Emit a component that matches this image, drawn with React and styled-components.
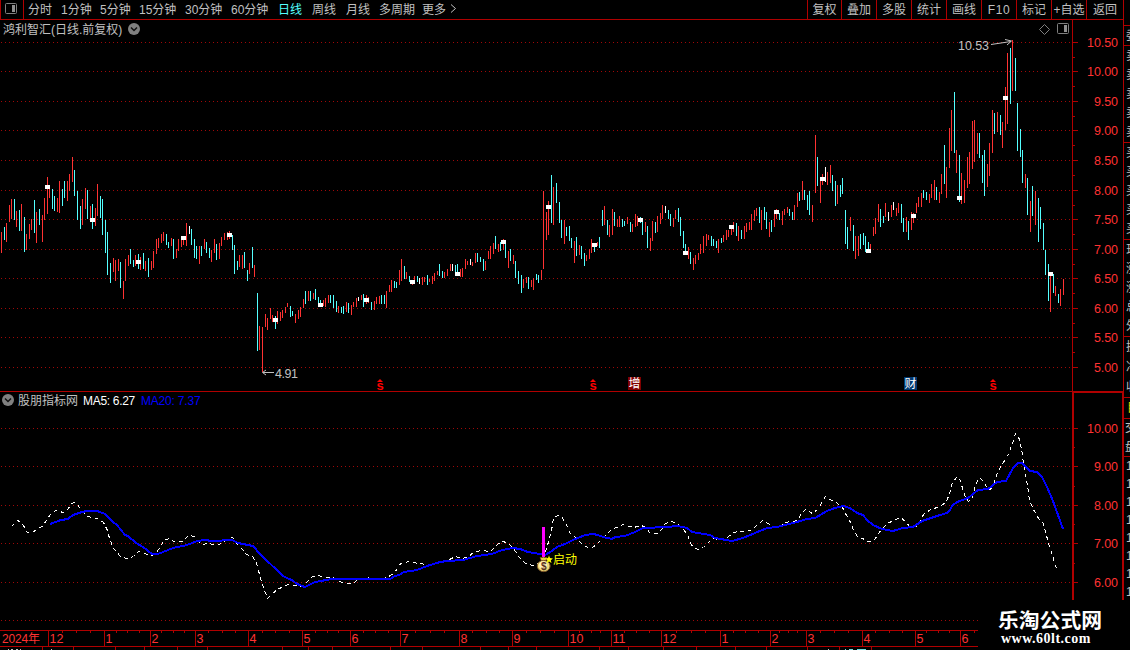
import React from "react";
import styled, { createGlobalStyle } from "styled-components";

const LINE = "#b00000";
const RED = "#ff3232";
const CYAN = "#54ffff";
const GREY = "#c0c0c0";
const BLUE = "#0000ff";

const Global = createGlobalStyle`
  html, body { margin: 0; background: #000; overflow: hidden; }
  * { box-sizing: border-box; }
  text { white-space: pre; }
`;

const Screen = styled.div`
  display: flex;
  width: 1130px;
  height: 650px;
  overflow: hidden;
  background: #000;
  color: ${GREY};
  font: 12px/14px "Liberation Sans", "Noto Sans CJK SC", sans-serif;
`;

const Workspace = styled.main`
  display: flex;
  flex-direction: column;
  width: 1123px;
  flex: none;
`;

const Toolbar = styled.nav`
  display: flex;
  align-items: stretch;
  height: 20px;
  flex: none;
  border-bottom: 1px solid ${LINE};
  border-left: 1px solid ${LINE};
`;

const LayoutButton = styled.button`
  display: flex;
  align-items: center;
  width: 23px;
  padding: 0 0 2px 4px;
  border: 0;
  border-right: 1px solid ${LINE};
  background: none;
`;

const Periods = styled.div`
  display: flex;
  flex: 1;
  padding-left: 4px;
`;

const Period = styled.button`
  width: ${(p) => p.$w}px;
  padding: 1px 0 0;
  border: 0;
  background: none;
  color: ${(p) => (p.$active ? CYAN : GREY)};
  font: 12px/17px "Liberation Sans", "Noto Sans CJK SC", sans-serif;
  text-align: left;
  white-space: nowrap;
`;

const Tools = styled.div`
  display: flex;
`;

const Tool = styled.button`
  width: ${(p) => p.$w}px;
  padding: 1px 0 0;
  border: 0;
  border-left: 1px solid ${LINE};
  background: none;
  color: ${GREY};
  font: 12px/17px "Liberation Sans", "Noto Sans CJK SC", sans-serif;
  letter-spacing: ${(p) => p.$track || 0}px;
  text-align: center;
  white-space: nowrap;
`;

const Panel = styled.section`
  position: relative;
  height: ${(p) => p.$h}px;
  flex: none;
`;

const Chart = styled.svg`
  display: block;
  font-family: "Liberation Sans", "Noto Sans CJK SC", sans-serif;
`;

const Heading = styled.header`
  position: absolute;
  top: ${(p) => p.$top}px;
  left: ${(p) => p.$left}px;
  display: flex;
  align-items: center;
  gap: ${(p) => p.$gap}px;
  height: 14px;
  color: ${GREY};
  white-space: nowrap;
`;

const Reading = styled.span`
  width: ${(p) => p.$w}px;
  padding-top: 1px;
  color: ${(p) => p.$color};
  letter-spacing: ${(p) => p.$track || 0}px;
`;

const PanelTools = styled.div`
  position: absolute;
  top: 3px;
  left: 1038px;
  display: flex;
  gap: 6px;
`;

const Lower = styled.div`
  position: relative;
`;

const Quote = styled.aside`
  display: flex;
  flex-direction: column;
  width: 7px;
  height: 600px;
  overflow: hidden;
  border-left: 1px solid ${LINE};
`;

const QuoteGroup = styled.div`
  display: flex;
  flex-direction: column;
  flex: none;
  height: ${(p) => p.$h}px;
  padding-left: ${(p) => p.$pad ?? 2}px;
  border-bottom: ${(p) => (p.$open ? "0" : `1px solid ${LINE}`)};
  color: ${(p) => p.$color || GREY};
`;

const QuoteRow = styled.div`
  display: flex;
  flex: 1;
  align-items: center;
  white-space: nowrap;
`;

const Brand = styled.div`
  position: absolute;
  left: 978px;
  bottom: 0;
  display: flex;
  flex-direction: column;
  width: 152px;
  height: 50px;
  padding: 8px 0 0 20px;
  background: #000;
  color: #fff;
  white-space: nowrap;
`;

const BrandName = styled.strong`
  font: 700 20.8px/22px "Noto Sans CJK SC", sans-serif;
`;

const BrandUrl = styled.span`
  padding: 1px 0 0 3px;
  font: 700 14px/16px "Liberation Serif", serif;
  letter-spacing: 0.5px;
`;

// Kind (r up, c down, w flat), x, high and low of each bar.
const BARS = `
r1,232,253 c4,227,240 r6,223,242 r9,205,222 r11,199,219 c14,199,220 r16,211,227 c19,210,231 r21,204,231 c24,217,252
r26,234,250 r29,224,239 r31,219,230 c34,200,233 r36,212,243 c39,209,225 r42,215,242 r44,198,220 r47,177,214 r49,187,198
c52,189,209 c54,196,211 r57,198,212 r59,181,213 c62,189,206 c64,181,198 r67,181,201 r69,174,191 r72,157,182 c74,170,196
c77,191,220 c80,206,229 r82,199,225 r85,188,209 c87,190,219 r90,206,220 c92,204,229 r95,208,226 r97,184,216 c100,196,218
c102,199,235 c105,220,253 c107,232,275 c110,263,283 r113,258,272 r115,260,281 r118,259,271 c120,262,288 r123,281,299 r125,259,281
r128,255,266 c130,249,264 c133,260,267 r135,255,266 c138,254,269 r140,257,270 c143,253,269 r145,261,271 c148,258,277 r151,261,270
r153,251,268 r156,239,254 r158,238,248 r161,234,243 r163,232,241 c166,234,245 c168,242,248 r171,238,246 c173,239,259 r176,249,258
r178,239,251 r181,237,247 r183,237,245 r186,223,246 w189,226,234 c191,229,245 c194,239,258 c196,246,259 r199,246,264 c201,246,256
r204,239,249 c206,242,253 c209,248,258 r211,250,262 r214,239,253 c216,244,260 r219,243,259 r221,237,246 r224,233,240 r227,232,240
r229,231,239 c232,235,250 c234,245,274 c237,261,270 r239,255,267 r242,255,269 c244,252,268 c247,270,281 r249,263,274 c252,247,268
r254,265,277 c257,293,351 r259,326,350 r262,327,372 r265,314,327 r267,318,330 r270,308,319 r272,315,322 c275,316,329 r277,311,324
r280,312,321 r282,310,318 r285,307,313 r287,303,307 c290,306,317 c292,311,316 r295,314,323 r298,310,319 r300,307,317 r303,299,308
c305,291,304 r308,291,301 c310,291,301 r313,293,299 c315,289,300 c318,297,305 c320,300,306 r323,300,306 r325,298,307 r328,295,303
c330,295,303 c333,295,308 c336,301,312 r338,306,313 c341,307,313 c343,306,314 r346,302,312 c348,303,313 r351,305,315 r353,302,307
r356,298,307 w358,297,301 r361,295,300 c363,294,307 r366,295,304 r368,297,303 c371,302,310 r374,301,310 r376,297,304 r379,296,304
c381,295,304 c384,295,304 r386,291,308 r389,285,292 r391,280,292 c394,281,288 c396,282,288 r399,270,285 r401,259,281 c404,266,279
r406,272,279 c409,276,282 r412,280,285 r414,276,282 c417,276,282 w419,278,284 r422,277,285 r424,277,282 c427,275,285 r429,279,282
r432,276,284 r434,273,281 r437,271,275 c439,264,276 c442,271,278 r444,272,278 r447,269,276 r450,264,271 w452,264,271 c455,265,274
c457,264,274 r460,269,277 r462,268,277 r465,259,269 r467,261,265 w470,259,265 r472,262,266 r475,253,263 c477,253,262 c480,257,262
c483,259,271 r485,261,270 r488,251,259 r490,246,259 r493,243,254 c495,236,249 r498,244,252 c500,242,251 r503,239,250 c505,242,258
r508,251,268 c510,249,261 r513,255,264 c515,261,278 c518,271,284 c521,275,293 r523,279,288 r526,277,283 c528,277,289 r531,280,287
r533,278,290 c536,274,280 c538,275,283 r541,270,280 r543,191,269 r546,212,240 r548,201,235 c551,175,223 r553,187,225 c556,183,203
c559,202,223 c561,220,238 r564,220,244 c566,227,236 c569,226,241 c571,238,248 r574,241,263 c576,237,256 r579,245,255 c581,246,259
c584,253,266 r586,255,261 r589,249,259 r591,239,253 c594,243,252 r597,242,246 c599,237,248 c602,210,226 r604,206,225 c607,220,235
r609,225,237 r612,209,235 c614,212,226 r617,219,227 r619,216,227 c622,219,227 c624,221,226 r627,217,224 c630,222,232 r632,224,232
r635,214,227 r637,216,226 c640,217,223 c642,221,235 r645,222,232 c647,226,248 r650,238,251 r652,221,241 c655,222,233 r657,216,232
r660,213,224 r662,205,219 w665,206,213 c668,210,219 c670,214,226 r673,218,227 r675,210,219 c678,208,222 c680,217,236 c683,231,248
c685,244,253 r688,247,259 c690,252,264 r693,258,270 r695,255,264 r698,253,260 r700,244,254 r703,236,253 r706,234,246 r708,235,240
c711,236,246 c713,239,246 c716,241,248 r718,239,253 c721,238,243 r723,235,242 r726,230,240 r728,230,237 r731,225,235 r733,222,232
c736,223,236 r738,226,241 c741,230,239 r744,226,239 r746,223,232 r749,222,230 r751,214,230 r754,210,221 r756,208,216 c759,207,223
r761,210,230 c764,207,220 c766,212,229 r769,222,237 c771,220,232 r774,213,227 r776,209,219 c779,213,220 r782,211,225 r784,209,215
r787,207,213 c789,209,216 c792,212,220 r794,205,220 r797,193,207 c799,192,201 r802,181,200 c804,190,200 c807,195,210 c809,191,215
r812,205,222 r815,135,193 c817,157,186 r820,177,203 r822,174,185 w825,167,182 r827,172,185 r830,165,183 c832,175,191 c835,181,206
r837,185,204 c840,185,197 c842,178,194 c845,210,244 c847,227,249 r850,217,231 c853,225,251 r855,236,259 r858,236,256 c860,234,249
c863,233,245 c865,236,252 c868,242,253 r870,244,250 r873,227,236 r875,218,234 r878,204,222 c880,209,227 c883,216,223 r885,203,217
w888,212,221 r891,205,217 w893,202,210 r896,208,216 r898,203,213 c901,204,223 c903,218,232 r906,217,232 c908,221,240 r911,212,230
r913,213,223 r916,203,213 r918,197,207 r921,193,207 c923,190,198 c926,192,200 r929,194,203 r931,184,198 r934,180,200 c936,187,200
r939,192,203 r941,174,194 c944,145,184 r946,167,198 r949,128,168 r951,110,151 c954,92,153 r956,150,173 c959,155,202 r961,173,204
r964,180,203 r967,157,188 r969,152,184 r972,121,169 r974,120,162 r977,133,154 c979,133,158 c982,155,183 c984,150,196 r987,164,187
r989,143,176 r992,110,153 c994,113,134 r997,112,132 c1000,115,135 r1002,122,148 r1005,87,130 r1007,53,124 c1010,48,104 r1012,40,91
c1015,58,91 c1017,103,151 c1020,129,157 c1022,150,183 r1025,174,188 c1027,178,215 r1030,201,232 c1032,186,216 r1035,191,225 c1038,198,242
c1040,207,229 c1043,223,250 c1045,250,275 c1048,264,301 r1050,275,312 c1053,274,293 r1055,286,296 c1058,294,303 r1060,289,306 r1063,279,295
`.trim().split(/\s+/).map((s) => [s[0], ...s.slice(1).split(",").map(Number)]);

const barPath = (kind) =>
  BARS.filter((b) => b[0] === kind).map(([, x, hi, lo]) => `M${x + 0.5} ${hi}V${lo}`).join("");

const MARKS = [
  [45, 185], [90, 218], [136, 260], [181, 236], [227, 233], [273, 318], [318, 303], [364, 298], [410, 280],
  [455, 272], [501, 240], [546, 205], [592, 243], [638, 218], [683, 251], [729, 225], [774, 210], [820, 177],
  [866, 249], [911, 214], [957, 196], [1003, 96], [1048, 272],
];

const MAIN_AXIS = [
  ["10.50", 42], ["10.00", 71], ["9.50", 101], ["9.00", 130], ["8.50", 160], ["8.00", 190],
  ["7.50", 219], ["7.00", 249], ["6.50", 278], ["6.00", 308], ["5.50", 337], ["5.00", 367],
];
const MAIN_MINOR = [57, 86, 116, 145, 175, 205, 234, 264, 293, 323, 352];
const SUB_AXIS = [["10.00", 428], ["9.00", 466], ["8.00", 505], ["7.00", 543], ["6.00", 582]];
const SUB_MINOR = [447, 486, 524, 563];

const MA20 =
  "50,524 61,520 68,519 73,515 82,512 87,511 97,511 105,514 113,522 117,525 125,535 128,536 136,543 143,547 152,554 158,554 173,548 187,545 197,541 205,540 212,541 232,540 238,543 253,546 260,554 283,576 289,579 292,580 297,584 305,587 315,582 332,579 390,579 395,576 399,575 404,572 417,570 427,566 440,562 447,561 463,560 477,556 492,554 502,550 513,548 520,549 528,552 540,554 545,555 552,551 557,547 565,544 573,540 585,535 593,534 598,535 603,537 612,539 615,537 625,536 635,532 643,528 667,527 678,526 687,528 692,532 710,535 715,538 732,541 743,538 767,528 777,527 797,522 807,519 815,518 827,511 835,508 843,506 850,508 857,513 863,515 867,520 873,525 882,529 893,531 903,528 913,527 922,521 937,516 947,513 950,510 952,506 957,502 968,498 978,490 988,489 997,482 1006,481 1013,468 1018,463 1022,463 1030,471 1037,472 1042,477 1047,487 1053,501 1058,515 1063,529";
const MA5 =
  "11,526 17,520 21,522 23,525 27,532 32,532 36,529 43,525 45,521 50,514 55,510 63,512 68,508 71,503 74,502 77,504 81,510 87,516 97,518 103,522 107,530 109,538 113,548 121,557 127,558 133,556 138,551 144,553 151,555 155,553 161,545 163,540 169,538 175,542 182,541 188,535 194,536 197,540 202,544 208,543 217,545 223,541 232,537 237,544 242,549 246,554 252,556 256,562 260,578 263,587 267,598 272,593 277,589 283,586 288,584 295,585 302,586 307,581 312,576 318,575 325,577 332,577 338,580 343,583 352,583 358,579 366,577 375,579 382,579 390,575 395,571 399,564 403,562 410,561 417,563 427,564 435,563 445,561 455,556 462,558 468,556 473,552 480,550 490,551 497,544 501,541 507,542 513,548 519,557 525,563 532,565 538,563 543,557 547,545 551,530 553,518 557,515 560,515 565,522 569,532 575,537 580,542 585,546 591,548 597,543 603,537 607,533 612,528 617,527 622,524 633,527 641,525 645,527 650,533 657,533 661,529 665,523 671,521 677,523 682,528 687,534 690,543 693,547 698,549 703,547 709,541 713,538 718,539 725,539 728,536 733,532 738,531 745,531 750,530 755,526 762,520 766,522 772,526 779,527 784,522 792,521 797,520 801,513 805,509 812,513 817,509 821,503 825,496 829,499 836,502 842,507 845,513 850,522 853,530 857,536 862,538 868,541 873,541 878,533 882,528 887,523 893,520 900,517 905,521 910,527 916,526 920,520 923,514 930,509 940,506 946,501 949,493 952,482 957,476 960,480 962,488 965,497 968,501 972,497 975,484 979,477 983,481 987,488 990,489 993,484 997,472 1002,463 1007,456 1012,443 1015,433 1018,436 1021,448 1023,463 1027,485 1029,500 1033,509 1038,518 1042,521 1045,531 1048,543 1052,555 1055,566 1059,570";

const MONTHS = [
  ["12", 48], ["1", 104], ["2", 150], ["3", 195], ["4", 248], ["5", 302], ["6", 350], ["7", 400], ["8", 459],
  ["9", 512], ["10", 568], ["11", 611], ["12", 661], ["1", 720], ["2", 770], ["3", 806], ["4", 862], ["5", 915], ["6", 960],
];
const WEEK_TICKS = [
  62, 76, 90, 116, 127, 139, 161, 173, 184, 208, 222, 235, 262, 275, 289, 315, 327, 338, 363, 375, 388, 415, 430,
  444, 472, 486, 499, 526, 540, 554, 579, 591, 600, 624, 636, 649, 676, 691, 705, 733, 745, 758, 779, 788, 797,
  820, 834, 848, 875, 889, 902, 926, 938, 949, 974,
];
const FOOT_TICKS = [42, 73, 115, 144, 177, 207, 282, 308, 332, 390, 422, 480, 508, 536, 599, 628, 663, 696, 735, 766, 807, 839, 871];

const PERIODS = [
  ["分时", 33], ["1分钟", 39], ["5分钟", 39], ["15分钟", 46], ["30分钟", 46], ["60分钟", 47],
  ["日线", 34], ["周线", 34], ["月线", 33], ["多周期", 43], ["更多", 28],
];
const TOOLS = [
  ["复权", 34], ["叠加", 35], ["多股", 35], ["统计", 35], ["画线", 35], ["F10", 35], ["标记", 35], ["+自选", 35], ["返回", 37],
];

const hline = (y, x2) => `M1 ${y + 0.5}H${x2}`;

function Collapse() {
  return (
    <svg width="12" height="12" viewBox="0 0 12 12">
      <circle cx="6" cy="6" r="6" fill="#808080" />
      <path d="M3 4.5L6 7.5L9 4.5" fill="none" stroke="#101010" strokeWidth="1.5" />
    </svg>
  );
}

function SplitIcon() {
  return (
    <svg width="12" height="11" viewBox="0 0 12 11">
      <rect x="0.5" y="0.5" width="11" height="10" rx="1" fill="none" stroke="#808080" />
      <rect x="7" y="2" width="3" height="7" fill="#909090" />
    </svg>
  );
}

function AxisLabels({ items }) {
  return items.map(([label, y]) => (
    <text key={label} x="1118" y={y + 5} fill={RED} fontSize="12.5" textAnchor="end" textLength={label.length > 4 ? 31 : 24}>
      {label}
    </text>
  ));
}

function Dividend({ x }) {
  return (
    <g>
      <path d={`M${x - 3} 382L${x} 379L${x + 3} 382Z`} fill="#f00" />
      <text x={x} y="390" fill="#f00" fontSize="13" fontWeight="700" textAnchor="middle">s</text>
    </g>
  );
}

function NewsBadge({ x, fill, children }) {
  return (
    <g>
      <rect x={x} y="377" width="13" height="13" fill={fill} />
      <text x={x + 6.5} y="388" fill="#fff" fontSize="12" textAnchor="middle">{children}</text>
    </g>
  );
}

function PriceChart() {
  return (
    <Chart width="1123" height="372" viewBox="0 20 1123 372">
      <g fill="none" shapeRendering="crispEdges">
        <path d={MAIN_AXIS.map(([, y]) => hline(y, 1071)).join("")} stroke="#a00808" strokeDasharray="1 3" />
        <path
          d={`M1072.5 20V391M0 391.5H1123${MAIN_AXIS.map(([, y]) => `M1073 ${y + 0.5}H1078`).join("")}${MAIN_MINOR.map((y) => `M1073 ${y + 0.5}H1075`).join("")}`}
          stroke={LINE}
        />
        <path d={barPath("r")} stroke={RED} />
        <path d={barPath("c")} stroke={CYAN} />
        <path d={barPath("w")} stroke="#fff" />
        {MARKS.map(([x, y]) => <rect key={x} x={x} y={y} width="5" height="4" fill="#fff" />)}
      </g>
      <AxisLabels items={MAIN_AXIS} />
      <g fill="none" stroke={GREY}>
        <path d="M991 44.5L1011 41.5M1005 39.5L1011.5 41L1007 45" />
        <path d="M263 372.5H274M266 370L262.5 372.5L266 375" />
      </g>
      <text x="958" y="50" fill={GREY} fontSize="12.5" textLength="31">10.53</text>
      <text x="275" y="378" fill={GREY} fontSize="12.5" textLength="23">4.91</text>
      <Dividend x={380} />
      <Dividend x={593} />
      <Dividend x={993} />
      <NewsBadge x={628} fill="#800000">增</NewsBadge>
      <NewsBadge x={904} fill="#003870">财</NewsBadge>
    </Chart>
  );
}

function MoneyBag() {
  return (
    <g>
      <path d="M540 557.5H547L545.5 561H541.5Z" fill="#e8c840" stroke="#705010" strokeWidth="0.6" />
      <ellipse cx="543.7" cy="566" rx="6.4" ry="5.6" fill="#f0dc78" stroke="#805828" />
      <ellipse cx="543" cy="565" rx="4" ry="3.8" fill="#fff2b8" />
      <text x="543.8" y="569.5" fill="#583020" fontSize="10" fontWeight="700" textAnchor="middle">$</text>
      <path d="M549 555.5L550 558L553 558.5L550.8 560.3L551.5 563L549 561.5L546.8 563L547.3 560.3L545.5 558.5L548 558Z" fill="#ff0" />
    </g>
  );
}

function IndicatorChart() {
  return (
    <Chart width="1123" height="238" viewBox="0 392 1123 238">
      <g fill="none" shapeRendering="crispEdges">
        <path d={[...SUB_AXIS.map(([, y]) => y), 620].map((y) => hline(y, 1071)).join("")} stroke="#a00808" strokeDasharray="1 3" />
        <path d="M1073 392V600M1122.5 392V600" stroke={LINE} strokeWidth="2" />
        <path
          d={`M1072 392.5H1123${SUB_AXIS.map(([, y]) => `M1074 ${y + 0.5}H1078`).join("")}${SUB_MINOR.map((y) => `M1074 ${y + 0.5}H1075`).join("")}`}
          stroke={LINE}
        />
        <polyline points={MA5} stroke="#fff" strokeDasharray="4 3.5" transform="translate(.5 .5)" />
        <polyline points={MA20} stroke={BLUE} strokeWidth="2" />
        <path d="M543.5 527V557" stroke="#f0f" strokeWidth="3" />
      </g>
      <AxisLabels items={SUB_AXIS} />
      <MoneyBag />
      <text x="553" y="564" fill="#ff0" fontSize="12">启动</text>
    </Chart>
  );
}

function DateAxis() {
  return (
    <Chart width="1123" height="20" viewBox="0 630 1123 20">
      <g fill="none" shapeRendering="crispEdges">
        <path
          d={`M0 630.5H978M0 646.5H978${MONTHS.map(([, x]) => `M${x + 0.5} 630V646`).join("")}${WEEK_TICKS.map((x) => `M${x + 0.5} 631V633`).join("")}${FOOT_TICKS.map((x) => `M${x + 0.5} 647V650`).join("")}`}
          stroke={LINE}
        />
        <path d="M8 649.5h1M11 649.5h2M16 649.5h2M20 649.5h1M51 649.5h1M828 649.5h1" stroke={GREY} />
        <path d="M845 649.5h1M849 649.5h4M857 649.5h9" stroke="#70dcdc" />
      </g>
      <text x="2" y="643" fill={RED} fontSize="12" textLength="38">2024年</text>
      {MONTHS.map(([m, x]) => (
        <text key={x} x={x + 1.5} y="643" fill={RED} fontSize="12.5">{m}</text>
      ))}
    </Chart>
  );
}

export default function App() {
  return (
    <>
      <Global />
      <Screen>
        <Workspace>
          <Toolbar>
            <LayoutButton><SplitIcon /></LayoutButton>
            <Periods>
              {PERIODS.map(([name, w]) => (
                <Period key={name} $w={w} $active={name === "日线"}>{name}</Period>
              ))}
              <svg width="7" height="17" viewBox="0 0 7 17">
                <path d="M1 4.5L5.5 8.5L1 12.5" fill="none" stroke={GREY} />
              </svg>
            </Periods>
            <Tools>
              {TOOLS.map(([name, w]) => (
                <Tool key={name} $w={w} $track={name === "F10" ? 0.6 : 0}>{name}</Tool>
              ))}
            </Tools>
          </Toolbar>
          <Panel $h={372}>
            <PriceChart />
            <Heading $top={2} $left={3} $gap={5}>
              <Reading $w={120} $color={GREY}>鸿利智汇(日线.前复权)</Reading>
              <Collapse />
            </Heading>
            <PanelTools>
              <svg width="13" height="13" viewBox="0 0 13 13">
                <path d="M6.5 1.5L11.5 6.5L6.5 11.5L1.5 6.5Z" fill="none" stroke="#808080" />
              </svg>
              <SplitIcon />
            </PanelTools>
          </Panel>
          <Lower>
            <Panel $h={238}>
              <IndicatorChart />
              <Heading $top={1} $left={2} $gap={4}>
                <Collapse />
                <Reading $w={61} $color={GREY}>股朋指标网</Reading>
                <Reading $w={54} $color="#fff" $track={-0.3}>MA5: 6.27</Reading>
                <Reading $w={60} $color={BLUE} $track={-0.2}>MA20: 7.37</Reading>
              </Heading>
            </Panel>
            <DateAxis />
            <Brand>
              <BrandName>乐淘公式网</BrandName>
              <BrandUrl>www.60lt.com</BrandUrl>
            </Brand>
          </Lower>
        </Workspace>
        <Quote>
          <QuoteGroup $h={26} />
          <QuoteGroup $h={20}><QuoteRow>委比</QuoteRow></QuoteGroup>
          <QuoteGroup $h={97}>
            {["卖五", "卖四", "卖三", "卖二", "卖一"].map((t) => <QuoteRow key={t}>{t}</QuoteRow>)}
          </QuoteGroup>
          <QuoteGroup $h={97}>
            {["买一", "买二", "买三", "买四", "买五"].map((t) => <QuoteRow key={t}>{t}</QuoteRow>)}
          </QuoteGroup>
          <QuoteGroup $h={97}>
            {["现价", "涨跌", "涨幅", "总量", "外盘"].map((t) => <QuoteRow key={t}>{t}</QuoteRow>)}
          </QuoteGroup>
          <QuoteGroup $h={61}>
            {["换手", "净资", "收益"].map((t) => <QuoteRow key={t}>{t}</QuoteRow>)}
          </QuoteGroup>
          <QuoteGroup $h={21} $pad={3} $color="#d8d800"><QuoteRow>目</QuoteRow></QuoteGroup>
          <QuoteGroup $h={38} $pad={1}>
            <QuoteRow>交</QuoteRow>
            <QuoteRow>盘</QuoteRow>
          </QuoteGroup>
          <QuoteGroup $h={144} $open>
            {Array.from({ length: 8 }, (_, i) => <QuoteRow key={i}>14:56</QuoteRow>)}
          </QuoteGroup>
        </Quote>
      </Screen>
    </>
  );
}
